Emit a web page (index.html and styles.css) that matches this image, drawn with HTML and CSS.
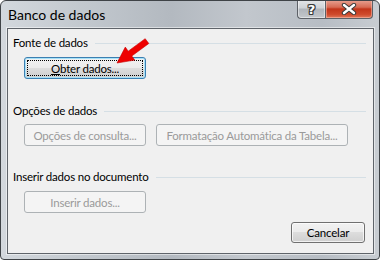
FILE: index.html
```html
<!DOCTYPE html>
<html lang="pt">
<head>
<meta charset="utf-8">
<title>Banco de dados</title>
<link rel="stylesheet" href="styles.css">
</head>
<body>
<div class="window">
  <div class="titlebar">
    <span class="title">Banco de dados</span>
    <div class="caption-buttons">
      <div class="cap help"><span class="qmark">?</span></div>
      <div class="cap close">
        <svg width="16" height="12" viewBox="0 0 16 12"><path d="M3 2 L13 10 M13 2 L3 10" stroke="#3a3a3a" stroke-width="4.4" stroke-linecap="round"/><path d="M3 2 L13 10 M13 2 L3 10" stroke="#ffffff" stroke-width="2.4" stroke-linecap="round"/></svg>
      </div>
    </div>
  </div>
  <div class="client">
    <section class="group g1">
      <div class="group-head"><span>Fonte de dados</span><i class="rule"></i></div>
      <div class="group-body">
        <button class="btn focused w122"><span class="focus-rect"><u>O</u>bter dados...</span></button>
      </div>
    </section>
    <section class="group g2">
      <div class="group-head"><span>Opções de dados</span><i class="rule"></i></div>
      <div class="group-body">
        <button class="btn disabled w122">Opções de consulta...</button>
        <button class="btn disabled w192">Formatação Automática da Tabela...</button>
      </div>
    </section>
    <section class="group g3">
      <div class="group-head"><span>Inserir dados no documento</span><i class="rule"></i></div>
      <div class="group-body">
        <button class="btn disabled w122">Inserir dados...</button>
      </div>
    </section>
    <div class="footer">
      <button class="btn w74">Cancelar</button>
    </div>
  </div>
  <svg class="arrow" width="40" height="34" viewBox="114 36 40 34">
    <polygon points="117,63 134.7,60.1 131.8,56 148.8,43.5 145.2,38.7 128.2,51.2 125.3,47.1" fill="#ee0000" stroke="#c80000" stroke-width="0.6" stroke-linejoin="round"/>
  </svg>
</div>
</body>
</html>
```
FILE: styles.css
```css
html, body {
  margin: 0;
  padding: 0;
  background: #ffffff;
}
body {
  font-family: Lato, "Noto Sans", "Liberation Sans", sans-serif;
  font-size: 11.5px;
  letter-spacing: -0.2px;
  color: #000;
}
.window {
  position: relative;
  width: 380px;
  height: 260px;
  box-sizing: border-box;
  border: 1px solid #3f4347;
  border-radius: 6px 6px 4px 4px;
  background: linear-gradient(to right, #d3d8dd 0%, #c3c9cf 20%, #b3b9c0 45%, #c2c7cd 65%, #b7bdc4 85%, #c8cdd2 100%);
  display: flex;
  flex-direction: column;
  overflow: hidden;
}
.titlebar {
  height: 27px;
  display: flex;
  align-items: flex-start;
  flex: none;
}
.title {
  font-size: 14px;
  letter-spacing: 0;
  padding: 5px 0 0 7px;
  line-height: 17px;
  color: #000;
}
.caption-buttons {
  margin-left: auto;
  margin-right: 6px;
  margin-top: -1px;
  display: flex;
}
.cap {
  height: 19px;
  box-sizing: border-box;
  border: 1px solid #5d6167;
  border-top: none;
  display: flex;
  align-items: center;
  justify-content: center;
}
.help {
  width: 28px;
  border-right: none;
  border-radius: 0 0 0 4px;
  background: linear-gradient(#e4e6e8 0%, #ced2d6 45%, #b0b5bb 50%, #c3c7cb 100%);
  box-shadow: inset 0 0 0 1px rgba(255,255,255,0.45);
}
.qmark {
  font-family: "DejaVu Sans", sans-serif;
  font-weight: bold;
  font-size: 13px;
  letter-spacing: 0;
  color: #fff;
  line-height: 13px;
  text-shadow: 1px 0 0 #3a3a3a, -1px 0 0 #3a3a3a, 0 1px 0 #3a3a3a, 0 -1px 0 #3a3a3a, 1px 1px 0 #3a3a3a, -1px -1px 0 #3a3a3a, 1px -1px 0 #3a3a3a, -1px 1px 0 #3a3a3a;
}
.close {
  width: 48px;
  border-radius: 0 0 4px 0;
  background: linear-gradient(#e8a393 0%, #d66b54 40%, #c2351a 50%, #cf4a2c 80%, #e0775a 100%);
  box-shadow: inset 0 0 0 1px rgba(255,210,200,0.45);
}
.client {
  flex: none;
  height: 226px;
  box-sizing: border-box;
  margin: 0 5px 0 6px;
  border: 1px solid #5f646a;
  background: #f0f0f0;
  display: flex;
  flex-direction: column;
  box-shadow: 0 0 0 1px rgba(255,255,255,0.5);
}
.group-head {
  display: flex;
  align-items: center;
  height: 14px;
  line-height: 14px;
  padding: 0 7px 0 5px;
  white-space: nowrap;
}
.rule {
  flex: 1;
  height: 1px;
  margin-left: 7px;
  background: #d5dfe5;
}
.group-body {
  display: flex;
  gap: 10px;
  padding-left: 16px;
  margin-top: 7px;
}
.g1 { margin-top: 7px; }
.g2 { margin-top: 25px; }
.g2 .group-body { margin-top: 6px; }
.g3 { margin-top: 24px; }
.footer {
  display: flex;
  justify-content: flex-end;
  padding-right: 8px;
  margin-top: 9px;
}
.btn {
  height: 22px;
  box-sizing: border-box;
  padding: 0;
  font: inherit;
  letter-spacing: inherit;
  color: #000;
  border: 1px solid #707070;
  border-radius: 3px;
  background: linear-gradient(#f2f2f2 0%, #ebebeb 50%, #dddddd 50%, #cfcfcf 100%);
  box-shadow: inset 0 0 0 1px rgba(255,255,255,0.7);
  display: flex;
  align-items: center;
  justify-content: center;
  white-space: nowrap;
}
.w122 { width: 122px; }
.w192 { width: 192px; }
.w74 { width: 74px; height: 21px; }
.focused {
  border-color: #3c7fb1;
  box-shadow: inset 0 0 0 1px #a6e1f8;
  padding: 2px;
}
.focus-rect {
  flex: 1;
  align-self: stretch;
  display: flex;
  align-items: center;
  justify-content: center;
  border: 1px dotted #000;
}
.focus-rect u { text-decoration: underline; }
.disabled {
  border-color: #adb2b5;
  background: #f4f4f4;
  box-shadow: none;
  color: #9a9a9a;
}
.arrow {
  position: absolute;
  left: 113px;
  top: 35px;
}
```
